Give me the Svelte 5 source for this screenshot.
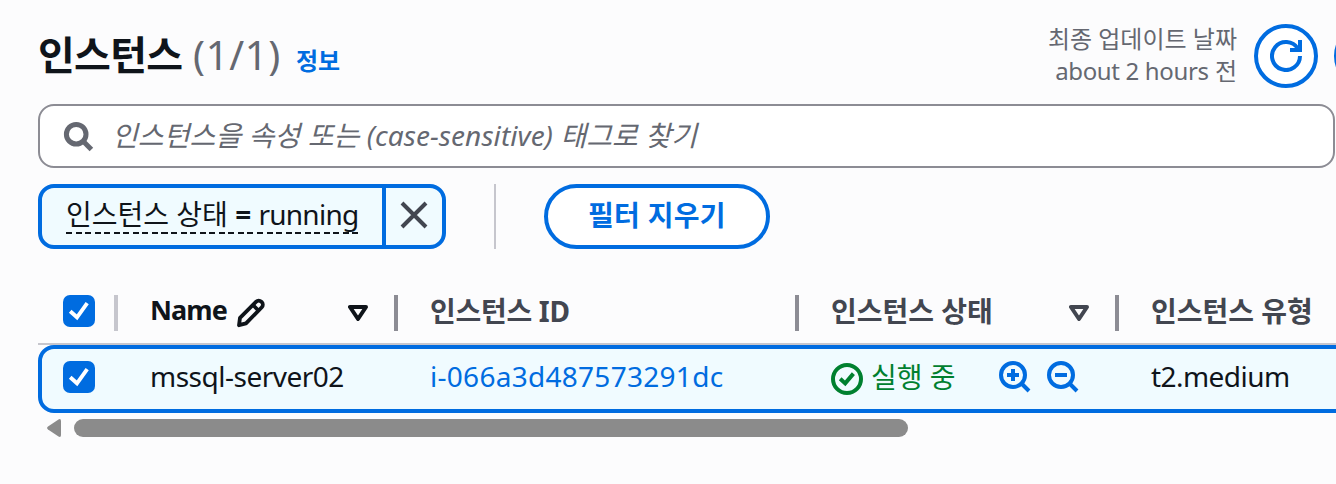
<script>
  const columns = [
    { key: 'name', label: 'Name', active: true, editable: true, sortable: true },
    { key: 'id', label: '인스턴스 ID' },
    { key: 'state', label: '인스턴스 상태', sortable: true },
    { key: 'type', label: '인스턴스 유형' }
  ];
  const instance = { name: 'mssql-server02', id: 'i-066a3d487573291dc', state: '실행 중', type: 't2.medium' };
</script>

{#snippet checkbox()}
  <span class="checkbox">
    <svg width="32" height="32" viewBox="0 0 32 32"><path d="M7.2 16.2 14 22.3 24.2 8.200" fill="none" stroke="#fff" stroke-width="3.9" /></svg>
  </span>
{/snippet}

{#snippet magnifier(plus)}
  <svg class="icon" width="32" height="32" viewBox="0 0 16 16" fill="none" stroke="currentColor" stroke-width="2">
    <circle cx="7" cy="7" r="6" />
    <path d="m11 11 4 4M4 7h6" />
    {#if plus}<path d="M7 4v6" />{/if}
  </svg>
{/snippet}

<main>
  <header>
    <h1>인스턴스 <span class="counter">(1/1)</span></h1>
    <a class="info">정보</a>
    <div class="updated">
      <div>최종 업데이트 날짜</div>
      <div class="ago"><span class="tight">about 2 hours</span> 전</div>
    </div>
    <button class="round" aria-label="refresh">
      <svg width="32" height="32" viewBox="0 0 16 16" fill="none" stroke="currentColor" stroke-width="2">
        <path d="M15 8a7 7 0 1 1-1.05-3.680" />
        <path d="M10 5h5V0" />
      </svg>
    </button>
    <button class="round" aria-label="connect"></button>
  </header>

  <div class="search">
    <svg width="32" height="32" viewBox="0 0 16 16" fill="none" stroke="#656871" stroke-width="2.5">
      <circle cx="7.100" cy="7.100" r="4.900" />
      <path d="m10.6 10.6 4.1 4.1" />
    </svg>
    <span class="placeholder">인스턴스을 속성 또는 (case-sensitive) 태그로 찾기</span>
  </div>

  <div class="filters">
    <div class="token">
      <div class="token-label"><span>인스턴스 상태 <b>=</b> <i>running</i></span></div>
      <div class="dismiss">
        <svg width="32" height="32" viewBox="0 0 32 32"><path d="m4 4 24 24M28 4 4 28" fill="none" stroke="#424650" stroke-width="4" /></svg>
      </div>
    </div>
    <div class="rule"></div>
    <button class="clear">필터 지우기</button>
  </div>

  <div class="table">
    <div class="grid head">
      <div class="cell select">{@render checkbox()}</div>
      {#each columns as col}
        <div class="cell {col.key}" class:active={col.active}>
          <span class="text">{col.label}</span>
          {#if col.editable}
            <svg class="pencil" width="32" height="32" viewBox="0 0 32 32" fill="none" stroke="currentColor" stroke-width="3.8" stroke-linejoin="round">
              <path d="M4 28.2 5 20.800 21.200 4.600a3.600 3.600 0 0 1 5 0l.6.6a3.600 3.600 0 0 1 0 5L11 26.400Z" />
              <path d="m18 8 6 6" />
            </svg>
          {/if}
          {#if col.sortable}
            <svg class="sort" width="20" height="16" viewBox="0 0 20 16"><path d="M2 2h16l-8 12Z" fill="none" stroke="currentColor" stroke-width="4" stroke-linejoin="round" /></svg>
          {/if}
        </div>
      {/each}
    </div>
    <div class="grid row">
      <div class="cell select">{@render checkbox()}</div>
      <div class="cell name"><span class="text">{instance.name}</span></div>
      <div class="cell id"><a class="text">{instance.id}</a></div>
      <div class="cell state">
        <svg class="status" width="32" height="32" viewBox="0 0 16 16" fill="none" stroke="currentColor" stroke-width="2">
          <circle cx="8" cy="8" r="7" />
          <path d="m4.600 7.900 2.500 2.300 4.100-4.900" />
        </svg>
        <span class="text">{instance.state}</span>
        <span class="actions">{@render magnifier(true)}{@render magnifier(false)}</span>
      </div>
      <div class="cell type"><span class="text">{instance.type}</span></div>
    </div>
  </div>

  <div class="scrollbar">
    <svg width="14" height="18" viewBox="0 0 14 18"><path d="M1 7.500 11.500.4Q14-.6 14 2V16q0 2.600-2.500 1.600L1 10.500q-1.800-1.500 0-3Z" fill="#8b8b8b" /></svg>
    <div class="thumb"></div>
  </div>
</main>

<style>
  :global(body) { margin: 0; background: #fcfcfd; overflow: hidden; }
  main {
    box-sizing: border-box;
    width: 1336px;
    height: 484px;
    padding-left: 38px;
    overflow: hidden;
    background: #fcfcfd;
    color: #0f141a;
    font: 28px/40px 'Noto Sans', 'Noto Sans CJK KR', sans-serif;
    white-space: nowrap;
  }
  svg { display: block; flex: none; }
  header { display: flex; height: 104px; align-items: flex-start; width: 1360px; }
  h1 { margin: 27px 0 0; font-size: 40px; line-height: 56px; font-weight: 700; letter-spacing: -0.7px; width: 258px; }
  .counter { font-weight: 400; color: #656871; letter-spacing: 0.6px; margin-left: 1px; }
  .info { margin-top: 41px; font-size: 24px; line-height: 40px; font-weight: 700; color: #006ce0; }
  .updated { margin: 22px 17px 0 auto; font-size: 24px; line-height: 33px; color: #656871; text-align: right; }
  .ago { margin-top: -1px; }
  .tight { letter-spacing: -0.35px; }
  button { box-sizing: border-box; border: 4px solid #006ce0; background: #fff; color: #006ce0; font-family: inherit; padding: 0; flex: none; }
  .round { display: flex; align-items: center; justify-content: center; width: 64px; height: 64px; border-radius: 50%; margin: 24px 16px 0 0; }
  .round:last-child { margin-right: 0; }
  .search { box-sizing: border-box; display: flex; width: 1297px; height: 64px; padding: 14px 22px; border: 2px solid #8c8c94; border-radius: 16px; background: #fff; }
  .placeholder { margin: -5px 0 0 18px; font-style: italic; color: #656871; letter-spacing: 0.09px; }
  .filters { display: flex; height: 65px; margin-top: 16px; }
  .token { box-sizing: border-box; display: flex; width: 408px; border: 4px solid #006ce0; border-radius: 16px; background: #f0fbff; }
  .token-label { box-sizing: border-box; width: 344px; padding: 8px 0 0 24px; border-right: 4px solid #006ce0; flex: none; }
  .token-label span { display: block; width: 292px; height: 36px; line-height: 37px; background: repeating-linear-gradient(90deg, #0f141a 0 6px, transparent 6px 9.550px) 0 100% / 100% 2px no-repeat; padding-bottom: 2px; }
  .token-label i { font-style: normal; letter-spacing: -0.75px; }
  .dismiss { padding: 11px 0 0 12px; }
  .rule { width: 2px; margin: 0 48px; background: #c6c6cd; }
  .clear { width: 226px; border-radius: 33px; font-size: 28px; line-height: 40px; font-weight: 700; letter-spacing: 0.3px; padding-bottom: 3px; }
  .table { margin-top: 46px; }
  .grid { display: grid; grid-template-columns: 80px 280px 401px 320px 300px; }
  .head { height: 48px; border-bottom: 2px solid #c6c6cd; font-weight: 700; color: #424650; }
  .cell { box-sizing: border-box; display: flex; align-items: flex-start; padding-left: 32px; }
  .select { padding-left: 25px; }
  .checkbox { width: 32px; height: 32px; border-radius: 7px; background: #006ce0; }
  .head .cell { height: 36px; border-right: 4px solid #8c8c94; }
  .head .select { border-color: #c6c6cd; }
  .head .type { border: 0; }
  .head .text { margin-top: -4px; }
  .head .active { color: #0f141a; }
  .head .name .text { margin-top: -5px; width: 77px; font-size: 27px; letter-spacing: -0.9px; }
  .head .id .text { letter-spacing: -0.3px; }
  .pencil { margin: 2px 0 0 8px; }
  .sort { margin: 10px 26px 0 auto; }
  .row { box-sizing: border-box; width: 1400px; height: 68px; padding-top: 12px; border: 4px solid #006ce0; border-radius: 16px; background: #f0fbff; grid-template-columns: 76px 280px 401px 320px 300px; }
  .row .select { padding-left: 21px; }
  .row .text { margin-top: -5px; }
  .row .name .text { letter-spacing: -0.5px; }
  .row .id .text { color: #006ce0; letter-spacing: 0.28px; }
  .row .type .text { letter-spacing: -0.55px; }
  .state .status { margin: 2px 8px 0 0; color: #00802f; }
  .row .state .text { margin-top: -4px; color: #00802f; width: 96px; margin-right: 32px; }
  .actions { display: flex; gap: 16px; color: #006ce0; }
  .scrollbar { display: flex; margin: 6px 0 0 9px; gap: 13px; }
  .thumb { width: 834px; height: 18px; border-radius: 9px; background: #8b8b8b; }
</style>
